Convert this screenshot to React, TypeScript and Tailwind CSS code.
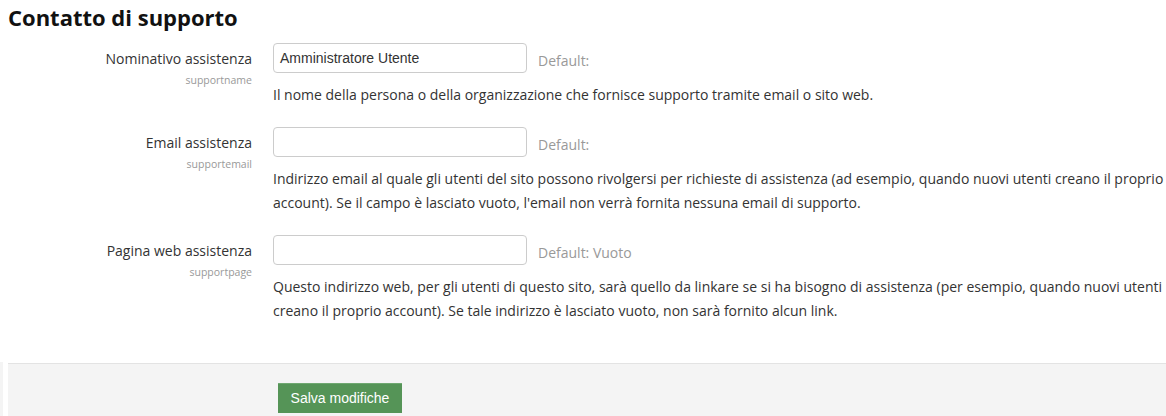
import React from "react";

const os = { fontFamily: '"Open Sans", "Liberation Sans", sans-serif' };

function Row({
  label,
  name,
  value,
  def,
  lines,
}: {
  label: string;
  name: string;
  value: string;
  def: string;
  lines: string[];
}) {
  return (
    <div className="flex mb-[20px]">
      <div className="w-[252px] shrink-0 text-right flex flex-col items-end">
        <div className="h-[30px] flex items-center text-[14px] text-[#333]">{label}</div>
        <div className="text-[10.5px] text-[#999] leading-[14px]">{name}</div>
      </div>
      <div className="ml-[21px] flex flex-col">
        <div className="flex items-start">
          <div
            className="w-[254px] h-[30px] border border-[#ccc] rounded-[4px] bg-white flex items-center px-[6px] text-[14px] text-[#333]"
            style={{ fontFamily: '"Liberation Sans", Arial, sans-serif' }}
          >
            {value}
          </div>
          <div className="ml-[11px] mt-[9px] text-[14px] leading-[18px] text-[#999]">{def}</div>
        </div>
        <div className="mt-[10px] text-[14px] leading-[24px] text-[#333] whitespace-nowrap">
          {lines.map((l, i) => (
            <div key={i}>{l}</div>
          ))}
        </div>
      </div>
    </div>
  );
}

export default function App() {
  return (
    <div className="w-[1166px] h-[416px] bg-white overflow-hidden relative" style={os}>
      <h3 className="pl-[8px] pt-[3px] text-[22px] leading-[28px] font-bold text-[#111]">
        Contatto di supporto
      </h3>
      <div className="mt-[12px]">
        <Row
          label="Nominativo assistenza"
          name="supportname"
          value="Amministratore Utente"
          def="Default:"
          lines={[
            "Il nome della persona o della organizzazione che fornisce supporto tramite email o sito web.",
          ]}
        />
        <Row
          label="Email assistenza"
          name="supportemail"
          value=""
          def="Default:"
          lines={[
            "Indirizzo email al quale gli utenti del sito possono rivolgersi per richieste di assistenza (ad esempio, quando nuovi utenti creano il proprio",
            "account). Se il campo è lasciato vuoto, l'email non verrà fornita nessuna email di supporto.",
          ]}
        />
        <Row
          label="Pagina web assistenza"
          name="supportpage"
          value=""
          def="Default: Vuoto"
          lines={[
            "Questo indirizzo web, per gli utenti di questo sito, sarà quello da linkare se si ha bisogno di assistenza (per esempio, quando nuovi utenti",
            "creano il proprio account). Se tale indirizzo è lasciato vuoto, non sarà fornito alcun link.",
          ]}
        />
      </div>
      <div className="flex mt-[40px] h-[60px]">
        <div className="w-[3px] bg-[#f4f4f4] mt-[-1px]" />
        <div className="ml-[5px] flex-1 bg-[#f4f4f4] border-t border-[#e3e3e3] pt-[19px] pl-[270px]">
          <button
            className="w-[124px] h-[30px] bg-[#559457] border-t border-[#6fa871] text-white text-[14px]"
            style={{ fontFamily: '"Liberation Sans", Arial, sans-serif' }}
          >
            Salva modifiche
          </button>
        </div>
      </div>
    </div>
  );
}
